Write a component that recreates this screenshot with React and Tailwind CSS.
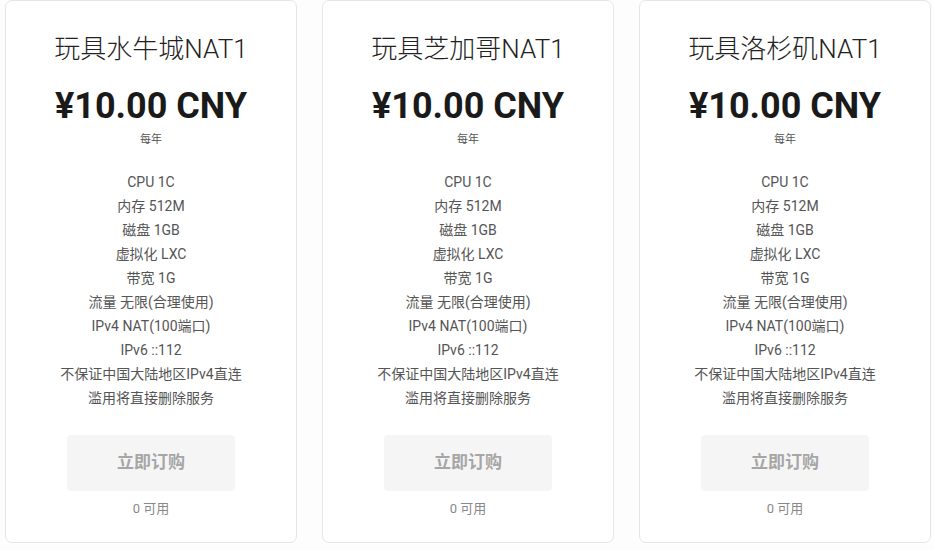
import React from "react";

const plans = ["玩具水牛城NAT1", "玩具芝加哥NAT1", "玩具洛杉矶NAT1"];
const features = [
  "CPU 1C",
  "内存 512M",
  "磁盘 1GB",
  "虚拟化 LXC",
  "带宽 1G",
  "流量 无限(合理使用)",
  "IPv4 NAT(100端口)",
  "IPv6 ::112",
  "不保证中国大陆地区IPv4直连",
  "滥用将直接删除服务",
];

function Card({ name }) {
  return (
    <div className="w-[292px] h-[543px] shrink-0 bg-white border border-[#e6e6e6] rounded-[7px] flex flex-col items-center">
      <div className="mt-[30px] h-[36px] leading-[36px] text-[26px] font-light text-[#222]">{name}</div>
      <div className="mt-[19px] h-[40px] leading-[40px] text-[36px] font-bold text-[#1a1a1a]">¥10.00 CNY</div>
      <div className="mt-[6px] h-[16px] leading-[16px] text-[11px] text-[#555]">每年</div>
      <div className="mt-[22px] flex flex-col items-center text-[14px] text-[#555]">
        {features.map((f) => (
          <div key={f} className="h-[24px] leading-[24px]">{f}</div>
        ))}
      </div>
      <div className="mt-[25px] w-[168px] h-[56px] rounded-[4px] bg-[#f5f5f5] flex items-center justify-center text-[17px] font-bold text-[#a6a6a6]">
        立即订购
      </div>
      <div className="mt-[10px] h-[16px] leading-[16px] text-[13px] text-[#888]">0 可用</div>
    </div>
  );
}

export default function App() {
  return (
    <div
      className="w-[934px] h-[550px] bg-[#fdfdfd] flex gap-[25px] pl-[5px] text-center"
      style={{ fontFamily: 'Roboto, "Noto Sans CJK SC", sans-serif' }}
    >
      {plans.map((p) => (
        <Card key={p} name={p} />
      ))}
    </div>
  );
}
